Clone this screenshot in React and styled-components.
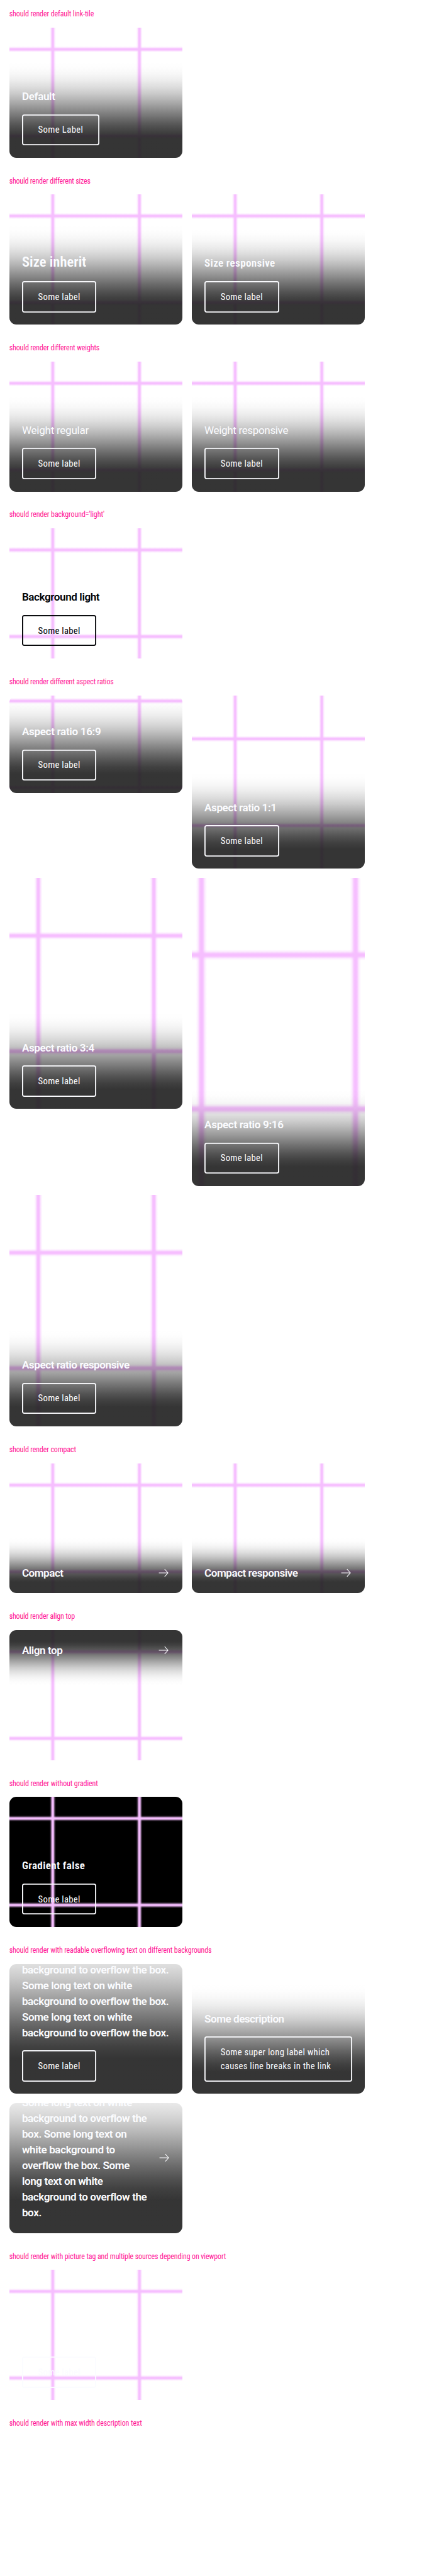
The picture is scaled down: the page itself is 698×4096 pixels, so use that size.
import React from "react";
import styled, { createGlobalStyle, css } from "styled-components";

// The page is designed on a 760px grid and drawn in a 698px window.
const u = (n) => `${((n * 698) / 760).toFixed(3)}px`;

const GlobalStyle = createGlobalStyle`
  * { box-sizing: border-box; }
  body {
    margin: 0;
    background: #fff;
    font-family: Roboto, "Liberation Sans", sans-serif;
  }
`;

const Page = styled.main`
  min-height: 4096px;
  padding: 0 ${u(16)};
  overflow: hidden;
`;

const Heading = styled.h2`
  margin: 0;
  height: ${(p) => u(p.$first ? 48 : 64)};
  padding-bottom: ${u(15.4)};
  display: flex;
  align-items: flex-end;
  color: #ff1493;
  font-size: 12px;
  font-weight: 400;
  line-height: ${u(16)};
  font-stretch: 75%;
  letter-spacing: ${(p) => p.$spacing || 0}px;
  white-space: nowrap;
`;

const Grid = styled.div`
  display: grid;
  grid-template-columns: ${u(300)} ${u(300)};
  gap: ${u(16)};
  align-items: start;
`;

const line = (dir) => css`linear-gradient(
  ${dir},
  transparent 23.2%,
  rgba(246, 190, 255, 0.3) 23.9%,
  rgba(246, 190, 255, 0.85) 24.45%,
  rgba(246, 190, 255, 1) 24.8%,
  rgba(246, 190, 255, 1) 25.2%,
  rgba(246, 190, 255, 0.85) 25.55%,
  rgba(246, 190, 255, 0.3) 26.1%,
  transparent 26.8%,
  transparent 73.2%,
  rgba(246, 190, 255, 0.3) 73.9%,
  rgba(246, 190, 255, 0.85) 74.45%,
  rgba(246, 190, 255, 1) 74.8%,
  rgba(246, 190, 255, 1) 75.2%,
  rgba(246, 190, 255, 0.85) 75.55%,
  rgba(246, 190, 255, 0.3) 76.1%,
  transparent 76.8%
)`;

const TileBox = styled.div`
  display: flex;
  flex-direction: column;
  justify-content: ${(p) => (p.$top ? "flex-start" : "flex-end")};
  width: ${u(300)};
  height: ${(p) => u(p.$height)};
  border-radius: ${u(12)};
  overflow: hidden;
  color: ${(p) => (p.$light ? "#010205" : "#fbfcff")};
  background-color: ${(p) => (p.$black ? "#000" : "#fff")};
  ${(p) =>
    !p.$plain &&
    css`
      background-image: ${line("to right")}, ${line("to bottom")};
      background-size: ${u(Math.max(300, p.$height))} ${u(Math.max(300, p.$height))};
      background-position: center;
      background-repeat: no-repeat;
    `}
`;

const shade = (dir) => css`linear-gradient(
  ${dir},
  rgba(31, 31, 31, 0.9) 0%,
  rgba(31, 31, 31, 0.9) 20%,
  rgba(31, 31, 31, 0.852589) 26.67%,
  rgba(31, 31, 31, 0.768225) 33.33%,
  rgba(31, 31, 31, 0.668116) 40%,
  rgba(31, 31, 31, 0.557309) 46.67%,
  rgba(31, 31, 31, 0.442691) 53.33%,
  rgba(31, 31, 31, 0.331884) 60%,
  rgba(31, 31, 31, 0.231775) 66.67%,
  rgba(31, 31, 31, 0.147411) 73.33%,
  rgba(31, 31, 31, 0.0816599) 80%,
  rgba(31, 31, 31, 0.03551) 86.67%,
  rgba(31, 31, 31, 0.0086472) 93.33%,
  rgba(31, 31, 31, 0) 100%
)`;

const Content = styled.div`
  flex: none;
  display: flex;
  flex-direction: ${(p) => (p.$compact ? "row" : "column")};
  align-items: ${(p) => (p.$compact ? "center" : "flex-start")};
  justify-content: space-between;
  gap: ${u(17)};
  padding: ${(p) => (p.$top ? `${u(21.4)} ${u(22)} ${u(48)}` : `${u(48)} ${u(22)} ${u(21.3)}`)};
  ${(p) =>
    p.$shaded &&
    css`
      background: ${shade(p.$top ? "to bottom" : "to top")};
    `}
`;

const Title = styled.p`
  margin: 0 0 ${(p) => (p.$large ? "-1px" : 0)};
  font-size: ${(p) => u(p.$large ? 24.5 : 18.6)};
  line-height: ${(p) => u(p.$large ? 34 : 27.2)};
  font-weight: ${(p) => (p.$regular ? 400 : 600)};
  font-stretch: ${(p) => (p.$narrow ? "75%" : "100%")};
  letter-spacing: ${(p) => p.$spacing}px;
  white-space: nowrap;
`;

const Line = styled.span`
  display: block;
`;

const Button = styled.span`
  align-self: ${(p) => (p.$wide ? "stretch" : "auto")};
  padding: ${u(15)} ${u(28)};
  border-radius: ${u(4)};
  box-shadow: inset 0 0 0 ${u(2)} currentColor;
  font-size: ${u(16)};
  line-height: ${u(24)};
  font-stretch: 75%;
  letter-spacing: ${(p) => p.$spacing}px;
  white-space: nowrap;
`;

const ArrowIcon = styled.svg`
  flex: none;
  width: ${u(24)};
  height: ${u(24)};
  fill: none;
  stroke: currentColor;
  stroke-width: 1.1;
`;

const Arrow = () => (
  <ArrowIcon viewBox="0 0 24 24">
    <path d="M5 12h15.6M15 5.6l5.8 6.4-5.8 6.4" />
  </ArrowIcon>
);

const Lines = ({ of }) => of.map((t, i) => <Line key={i}>{t}</Line>);

function Tile({
  title, spacing = -0.41, narrow, label = "Some label", labelSpacing = 0.28, height = 225,
  compact, top, light, black, plain, shaded = true, large, regular,
}) {
  const wide = Array.isArray(label);
  return (
    <TileBox $height={height} $top={top} $light={light} $black={black} $plain={plain}>
      <Content $compact={compact} $top={top} $shaded={shaded && !light}>
        <Title $spacing={spacing} $narrow={narrow} $large={large} $regular={regular}>
          {Array.isArray(title) ? <Lines of={title} /> : title}
        </Title>
        {compact ? (
          <Arrow />
        ) : (
          <Button $spacing={labelSpacing} $wide={wide}>{wide ? <Lines of={label} /> : label}</Button>
        )}
      </Content>
    </TileBox>
  );
}

const sections = [
  { name: "should render default link-tile", spacing: -0.11, tiles: [{ title: "Default", spacing: -0.38, label: "Some Label", labelSpacing: 0.39 }] },
  {
    name: "should render different sizes", spacing: -0.21,
    tiles: [
      { title: "Size inherit", spacing: 0.08, narrow: true, large: true },
      { title: "Size responsive", spacing: 0.35, narrow: true },
    ],
  },
  {
    name: "should render different weights", spacing: -0.13,
    tiles: [
      { title: "Weight regular", spacing: -0.27, regular: true },
      { title: "Weight responsive", spacing: -0.375, regular: true },
    ],
  },
  { name: "should render background='light'", spacing: -0.08, tiles: [{ title: "Background light", light: true }] },
  {
    name: "should render different aspect ratios", spacing: -0.17,
    tiles: [
      { title: "Aspect ratio 16:9", spacing: -0.32, height: 168.75 },
      { title: "Aspect ratio 1:1", spacing: -0.42, height: 300 },
      { title: "Aspect ratio 3:4", spacing: -0.39, height: 400 },
      { title: "Aspect ratio 9:16", spacing: -0.31, height: 533.33 },
      { title: "Aspect ratio responsive", spacing: -0.42, height: 400 },
    ],
  },
  {
    name: "should render compact", spacing: -0.13,
    tiles: [
      { title: "Compact", spacing: -0.49, compact: true },
      { title: "Compact responsive", spacing: -0.48, compact: true },
    ],
  },
  { name: "should render align top", spacing: -0.19, tiles: [{ title: "Align top", spacing: -0.45, compact: true, top: true }] },
  {
    name: "should render without gradient", spacing: -0.11,
    tiles: [{ title: "Gradient false", spacing: 0.36, narrow: true, black: true, shaded: false }],
  },
  {
    name: "should render with readable overflowing text on different backgrounds", spacing: -0.14,
    tiles: [
      {
        plain: true,
        title: [
          "\u00a0", "background to overflow the box.",
          "Some long text on white", "background to overflow the box.",
          "Some long text on white", "background to overflow the box.",
        ],
      },
      {
        plain: true, title: "Some description", spacing: -0.49, labelSpacing: 0.28,
        label: ["Some super long label which", "causes line breaks in the link"],
      },
      {
        plain: true, compact: true,
        title: [
          "Some long text on white", "background to overflow the", "box. Some long text on", "white background to",
          "overflow the box. Some", "long text on white", "background to overflow the", "box.",
        ],
      },
    ],
  },
  {
    name: "should render with picture tag and multiple sources depending on viewport", spacing: -0.11,
    tiles: [{ title: "", shaded: false }],
  },
  { name: "should render with max width description text", spacing: -0.1, tiles: [] },
];

export default function App() {
  return (
    <>
      <GlobalStyle />
      <Page>
        {sections.map((s, i) => (
          <section key={s.name}>
            <Heading $first={i === 0} $spacing={s.spacing}>{s.name}</Heading>
            <Grid>
              {s.tiles.map((t, j) => (
                <Tile key={j} {...t} />
              ))}
            </Grid>
          </section>
        ))}
      </Page>
    </>
  );
}
